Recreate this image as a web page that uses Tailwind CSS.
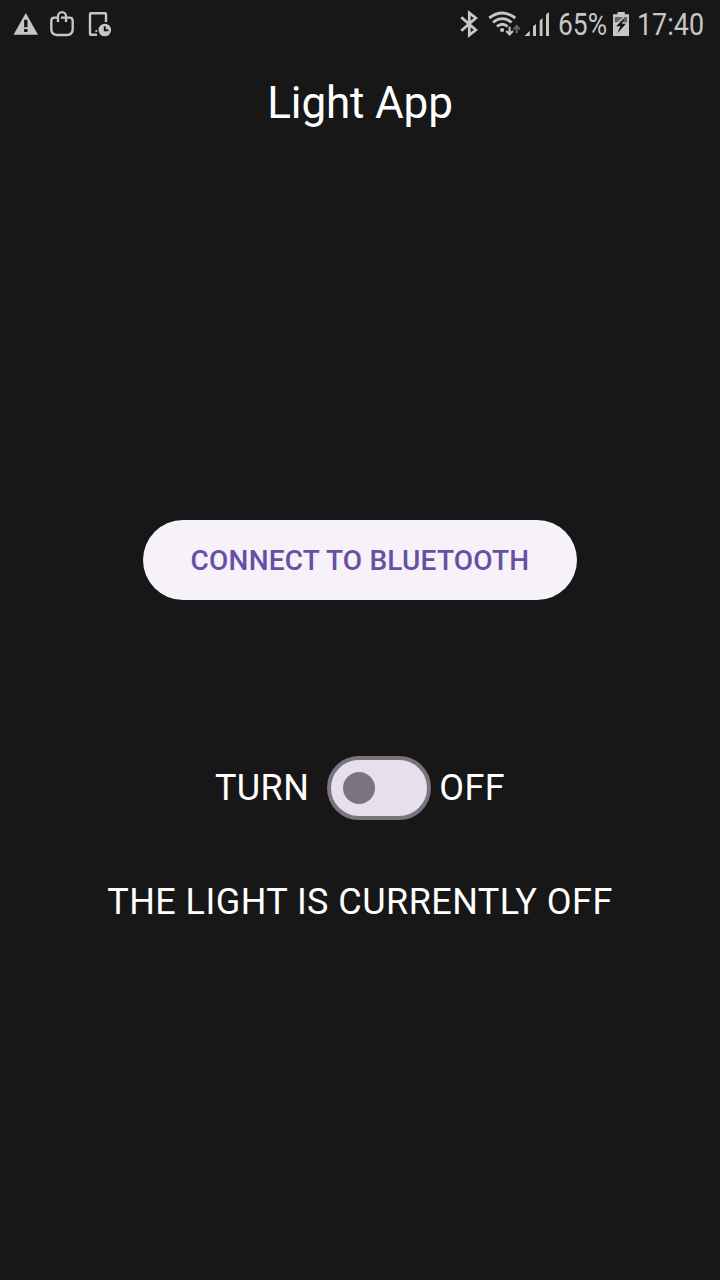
<!DOCTYPE html>
<html lang="en">
<head>
<meta charset="utf-8">
<title>Light App</title>
<script src="https://cdn.jsdelivr.net/npm/@tailwindcss/browser@4"></script>
</head>
<body class="bg-[#171717]">
<div class="flex h-[1280px] w-[720px] flex-col items-center overflow-hidden bg-[#171717] font-['Roboto',sans-serif] text-white">
  <header class="flex h-12 w-full shrink-0 justify-between text-[#c6c6c6]">
    <svg class="h-12 w-[130px]" viewBox="0 0 130 48" fill="none" stroke="currentColor">
      <path d="M25.8 13 38 34.8H13.5Z" fill="currentColor" stroke="none"/>
      <path d="M25.8 19.7v7.5M25.8 29v3" stroke="#171717" stroke-width="3.4"/>
      <path d="M57 17.6H54.5Q51.3 17.6 51.3 20.8V29Q51.3 35 57.3 35H66.7Q72.7 35 72.7 29V20.8Q72.7 17.6 69.5 17.6H61" stroke-width="2.4"/>
      <path d="M58 22V16.2a4 4 0 0 1 8 0V22" stroke-width="2.3"/>
      <path d="M97 34.7H91Q90 34.7 90 33.7V14.3Q90 13.3 91 13.3H105Q106 13.300 106 14.300V22" stroke-width="2.4"/>
      <circle cx="96.3" cy="31" r="1.100" fill="currentColor" stroke="none"/>
      <circle cx="104.8" cy="30" r="6.300" fill="currentColor" stroke="none"/>
      <path d="M104.800 26.200v4.100h3.600" stroke="#171717" stroke-width="2"/>
    </svg>
    <svg class="h-12 w-[270px]" viewBox="450 0 270 48" fill="none" stroke="currentColor">
      <path d="M461.300 17.300 475.800 30 469.300 35.200V12.800L475.800 18 461.300 30.700" stroke-width="2.800"/>
      <path d="M489.300 18Q502.300 8 515.300 18" stroke-width="2.900"/>
      <path d="M493 22.500Q502.300 14.800 511.600 22.500" stroke-width="2.800"/>
      <path d="M496.900 26.600Q502.300 21.900 507.700 26.600" stroke-width="2.700"/>
      <circle cx="502.100" cy="30" r="2.100" fill="currentColor" stroke="none"/>
      <path d="M509.600 26.800v7.400M506.300 31l3.300 3.400 3.300-3.400" stroke-width="2.100"/>
      <path d="M516.700 33.300v-7.200M513.500 29.400l3.200-3.400 3.200 3.400" stroke="#666" stroke-width="2.100"/>
      <path d="M524.500 36 529.800 30.700V36ZM533 36V26.300L536 24V36ZM539.700 36V20.600L542.500 18V36ZM546 36V14.700L549 12V36Z" fill="currentColor" stroke="none"/>
      <text x="558" y="35" font-size="31" textLength="49" lengthAdjust="spacingAndGlyphs" fill="currentColor" stroke="none">65%</text>
      <path d="M613 14.300h4.500V12h7.300v2.300H629V36H613Z" fill="currentColor" stroke="none"/>
      <path d="M614.800 17H627.200V22.300H614.800Z" fill="#666" stroke="none"/>
      <path d="M624.800 18 616 26.200H620.300L617.400 33.200 626 23.800H621.900Z" fill="#171717" stroke="none"/>
      <path d="M624 17.300 615.200 25" stroke-width="1.300"/>
      <text x="637" y="35" font-size="31" textLength="67" lengthAdjust="spacingAndGlyphs" fill="currentColor" stroke="none">17:40</text>
    </svg>
  </header>
  <h1 class="mt-[29px] text-[44px] leading-[52px] tracking-[-0.15px]">Light App</h1>
  <button class="mt-[391px] flex h-20 w-[434px] shrink-0 items-center justify-center rounded-full bg-[#f7f2fa] pt-0.5 text-[28px] font-medium tracking-[0.2px] text-[#6750a4]">CONNECT TO BLUETOOTH</button>
  <div class="mt-[156px] flex h-16 items-center text-[36px] tracking-[0.4px]">
    <span>TURN</span>
    <span role="switch" aria-checked="false" class="mr-2 ml-[18px] flex h-16 w-[104px] items-center rounded-full border-4 border-[#79747e] bg-[#e7e0ec] pl-3"><span class="size-8 rounded-full bg-[#79747e]"></span></span>
    <span>OFF</span>
  </div>
  <p class="mt-[61px] text-[36px] leading-[42px] tracking-[0.45px]">THE LIGHT IS CURRENTLY OFF</p>
</div>
</body>
</html>
